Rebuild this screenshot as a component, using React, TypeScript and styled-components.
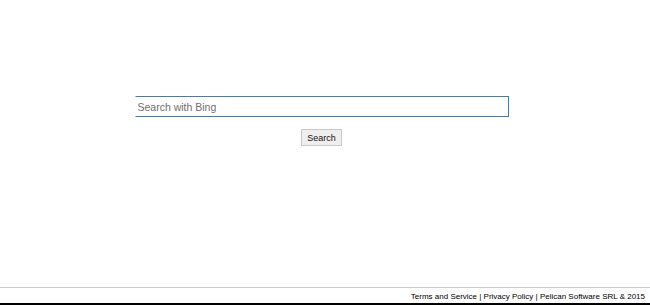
import React from "react";
import styled, { createGlobalStyle } from "styled-components";

const Global = createGlobalStyle`
	html, body {
		margin: 0;
		padding: 0;
		background: #fff;
		font-family: "Liberation Sans", Arial, sans-serif;
	}
`;

const Page = styled.div`
	height: 305px;
	display: flex;
	flex-direction: column;
`;

const Main = styled.main`
	flex: 1;
	display: flex;
	flex-direction: column;
	align-items: center;
	padding: 96px 7px 0 0;
`;

const SearchInput = styled.input`
	box-sizing: border-box;
	width: 374px;
	height: 21px;
	padding: 0 0 0 2px;
	border: 1px solid #3b7fbf;
	border-left-color: #fff;
	outline: none;
	font-family: "Liberation Sans", Tahoma, sans-serif;
	font-size: 10.5px;
	color: #333;
	&::placeholder {
		color: #6f6f6f;
	}
`;

const SearchButton = styled.button`
	margin-top: 12px;
	width: 41px;
	height: 17px;
	padding: 0;
	border: 1px solid #c8c8c8;
	background: #eeeeee;
	font-family: "Liberation Sans", Tahoma, sans-serif;
	font-size: 9px;
	color: #111;
`;

const Footer = styled.footer`
	border-top: 1px solid #cccccc;
	border-bottom: 2px solid #000;
	height: 14px;
	display: flex;
	justify-content: flex-end;
	align-items: center;
	padding: 1px 5px 0 0;
	font-size: 8px;
	color: #000;
`;

export default function App() {
	return (
		<Page>
			<Global />
			<Main>
				<SearchInput type="text" placeholder="Search with Bing" />
				<SearchButton>Search</SearchButton>
			</Main>
			<Footer>Terms and Service | Privacy Policy | Pelican Software SRL &amp; 2015</Footer>
		</Page>
	);
}
